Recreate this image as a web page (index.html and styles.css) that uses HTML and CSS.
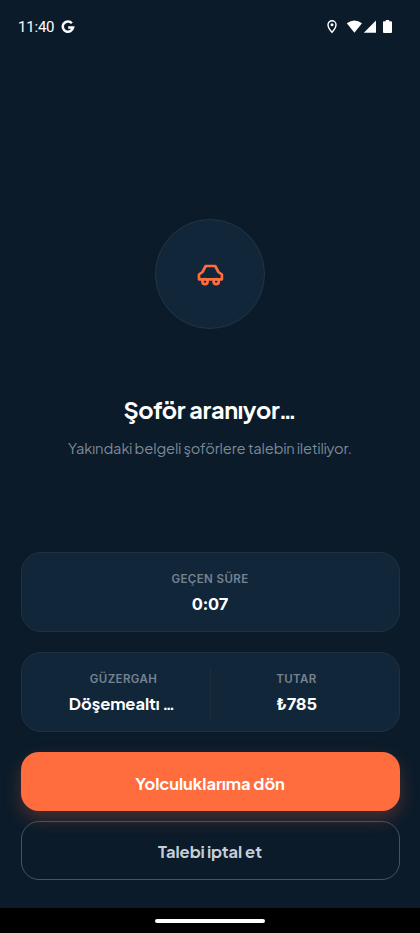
FILE: index.html
```html
<!DOCTYPE html>
<html lang="tr">
<head>
<meta charset="utf-8">
<meta name="viewport" content="width=device-width, initial-scale=1">
<title>Şoför aranıyor</title>
<link rel="stylesheet" href="styles.css">
</head>
<body>
<div class="screen">
  <header class="status">
    <span class="clock">11:40</span>
    <svg class="google" width="14" height="14" viewBox="0 0 14 14"><path d="M10.900 3.200A5.200 5.200 0 1 0 12.100 7.600H7.200" fill="none" stroke="#fff" stroke-width="2.500"/></svg>
    <svg class="icons" width="68" height="16" viewBox="0 0 68 16">
      <path d="M6 1.800a4 4 0 0 0-4 4c0 3 4 7.600 4 7.600s4-4.600 4-7.600a4 4 0 0 0-4-4z" fill="none" stroke="#fff" stroke-width="1.400"/>
      <circle cx="6" cy="5.800" r="1.500" fill="#fff"/>
      <path d="M20.800 4.300Q28.400-1.500 36 4.300L28.400 13.700z" fill="#fff"/>
      <path d="M50 1.500V13.700H37.800z" fill="#fff"/>
      <path d="M58 2.200h1.800V1h3.400v1.200h1.800q1 0 1 1v9.700q0 1-1 1h-7q-1 0-1-1V3.200q0-1 1-1z" fill="#fff"/>
    </svg>
  </header>
  <main class="content">
    <section class="search">
      <div class="ring">
        <svg width="40" height="40" viewBox="0 0 40 40" fill="none" stroke="#ff6d3f" stroke-width="2.700" stroke-linejoin="round">
          <path d="M15.700 12h9.500l3.200 6 3.500 2.500v4.800H9v-4.800l3.500-2.500z"/>
          <circle cx="15" cy="27.600" r="2.600"/>
          <circle cx="26.200" cy="27.600" r="2.600"/>
        </svg>
      </div>
      <h1 class="title">Şoför aranıyor…</h1>
      <p class="subtitle">Yakındaki belgeli şoförlere talebin iletiliyor.</p>
    </section>
    <section class="card">
      <div class="cell">
        <span class="label">GEÇEN SÜRE</span>
        <span class="value">0:07</span>
      </div>
    </section>
    <section class="card">
      <div class="cell">
        <span class="label">GÜZERGAH</span>
        <span class="value route">Döşemealtı …</span>
      </div>
      <div class="divider"></div>
      <div class="cell">
        <span class="label">TUTAR</span>
        <span class="value">₺785</span>
      </div>
    </section>
    <button class="btn primary">Yolculuklarıma dön</button>
    <button class="btn outline">Talebi iptal et</button>
  </main>
  <footer class="nav"><div class="handle"></div></footer>
</div>
</body>
</html>
```
FILE: styles.css
```css
* { box-sizing: border-box; }
body { margin: 0; background: #0b1b2a; font-family: "Plus Jakarta Sans", Inter, sans-serif; color: #fff; }
.screen { width: 420px; height: 933px; display: flex; flex-direction: column; overflow: hidden; }
.status { height: 53px; flex: none; display: flex; align-items: center; padding: 0 26px 0 18px; }
.clock { font: 400 15px/18px Roboto, sans-serif; letter-spacing: -0.2px; }
.google { margin-left: 7px; }
.icons { margin-left: auto; }
.content { flex: 1; display: flex; flex-direction: column; padding: 0 20.500px; }
.search { height: 499px; flex: none; display: flex; flex-direction: column; align-items: center; padding-top: 165.600px; }
.ring { width: 110px; height: 110px; flex: none; border-radius: 50%; background: #12263a; border: 1px solid #233545; display: flex; align-items: center; justify-content: center; }
.title { margin: 66px 0 0; font-size: 23.500px; line-height: 30px; font-weight: 700; letter-spacing: -0.330px; white-space: nowrap; }
.subtitle { margin: 12px 0 0; font-size: 14.700px; line-height: 22px; letter-spacing: -0.110px; color: #7c8996; white-space: nowrap; }
.card { height: 80px; flex: none; margin-bottom: 20px; background: #12263a; border: 1px solid #203241; border-radius: 20px; display: flex; align-items: center; padding: 2px 16px 0; }
.cell { flex: 1; display: flex; flex-direction: column; align-items: center; white-space: nowrap; }
.label { font-family: Inter, sans-serif; font-size: 11.500px; line-height: 16px; font-weight: 600; letter-spacing: 0.400px; color: #758391; }
.value { font-family: Inter, sans-serif; margin-top: 6px; font-size: 16.500px; line-height: 22px; font-weight: 700; letter-spacing: -0.150px; }
.route { font-family: "Plus Jakarta Sans", Inter, sans-serif; letter-spacing: -0.050px; margin-right: 3px; }
.divider { width: 1px; height: 50px; background: #1b2d3e; }
.btn { flex: none; height: 59px; border-radius: 18px; border: 0; font-family: inherit; font-size: 16.500px; font-weight: 700; color: #fff; padding: 3px 0 0; letter-spacing: -0.050px; }
.primary { background: #ff6d3f; box-shadow: 0 8px 18px rgba(255, 109, 63, 0.25); }
.outline { margin-top: 10px; background: transparent; border: 1px solid #47535f; color: #c4cfd9; padding-top: 2px; position: relative; }
.nav { height: 25px; flex: none; background: #000; display: flex; align-items: center; justify-content: center; }
.handle { width: 110px; height: 4px; border-radius: 2px; background: #fff; }
```
